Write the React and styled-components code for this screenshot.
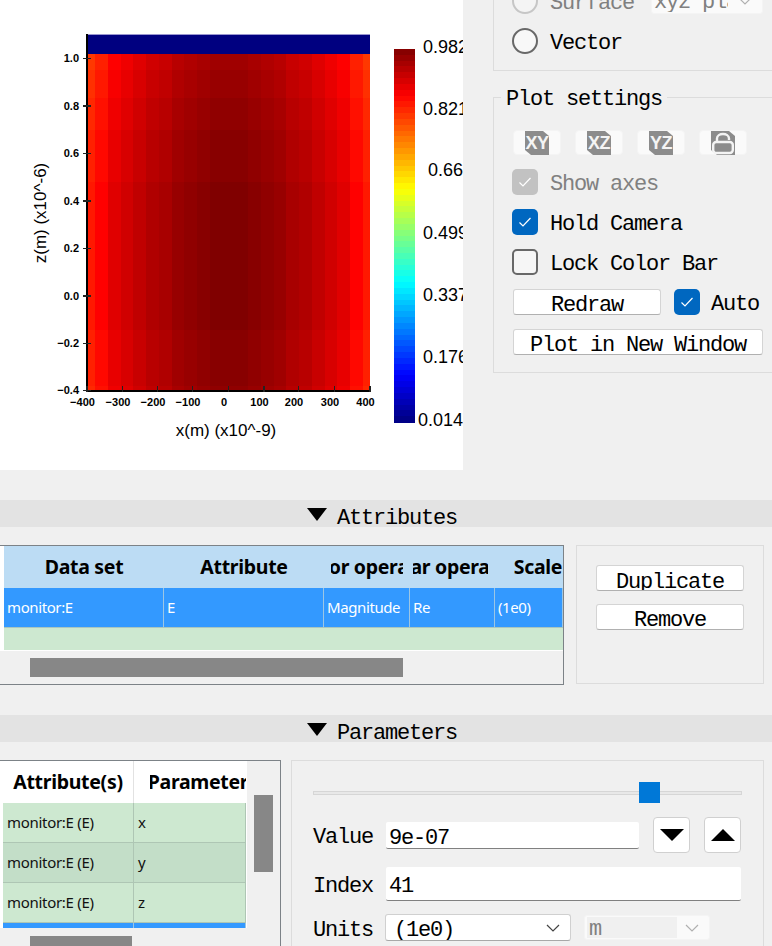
import styled, { createGlobalStyle } from "styled-components";

const UI_FONT = `"Liberation Mono", "DejaVu Sans Mono", monospace`;
const TABLE_FONT = `"Noto Sans", "Open Sans", sans-serif`;
const PLOT_FONT = `"Liberation Sans", Arial, sans-serif`;

const GlobalStyle = createGlobalStyle`
  html, body {
    margin: 0;
    background: #f0f0f0;
  }
`;

const Page = styled.div`
  width: 772px;
  height: 946px;
  overflow: hidden;
  background: #f0f0f0;
  font-family: ${UI_FONT};
  font-size: 22px;
  letter-spacing: -1.2px;
  color: #000;
`;

const TopRow = styled.div`
  display: flex;
  height: 500px;
`;

const PlotCanvas = styled.svg`
  display: block;
  flex: none;
  width: 463px;
  height: 470px;
  background: #fff;
  letter-spacing: 0;
`;

const TickLabel = styled.text`
  font-family: ${PLOT_FONT};
  font-size: 11px;
  font-weight: 700;
  fill: #000;
`;

const AxisTitle = styled.text`
  font-family: ${PLOT_FONT};
  font-size: 17px;
  fill: #000;
  text-anchor: middle;
`;

const BarLabel = styled.text`
  font-family: ${PLOT_FONT};
  font-size: 18px;
  fill: #000;
`;

const SideColumn = styled.div`
  flex: none;
  width: 309px;
  padding-left: 30px;
  box-sizing: border-box;
  display: flex;
  flex-direction: column;
  gap: 26px;
`;

const DisplayGroup = styled.div`
  flex: none;
  height: 111px;
  margin-top: -40px;
  margin-right: -10px;
  box-sizing: border-box;
  padding: 27px 0 0 18px;
  border: 1px solid #dcdcdc;
  display: flex;
  flex-direction: column;
  gap: 14px;
`;

const PlotGroup = styled.div`
  position: relative;
  flex: none;
  height: 276px;
  margin-right: -10px;
  box-sizing: border-box;
  padding: 32px 0 0 19px;
  border: 1px solid #dcdcdc;
  display: flex;
  flex-direction: column;
  gap: 14px;
`;

const GroupTitle = styled.span`
  position: absolute;
  top: -10px;
  left: 7px;
  padding: 0 5px 0 5px;
  background: #f0f0f0;
  line-height: 24px;
  white-space: nowrap;
`;

const OptionRow = styled.div`
  display: flex;
  align-items: center;
  gap: 12px;
  height: 26px;
  margin-left: ${(p) => (p.$flush ? "0" : "-1px")};
  color: ${(p) => (p.$disabled ? "#808080" : "#000")};
  white-space: nowrap;
`;

const OptionLabel = styled.span`
  line-height: 26px;
  margin-top: 6px;
`;

const Radio = styled.span`
  flex: none;
  width: 26px;
  height: 26px;
  box-sizing: border-box;
  border-radius: 50%;
  border: 2px solid ${(p) => (p.$disabled ? "#c6c6c6" : "#686868")};
  background: ${(p) => (p.$disabled ? "#f4f4f4" : "#f8f8f8")};
`;

const CheckFace = styled.span`
  flex: none;
  width: 26px;
  height: 26px;
  box-sizing: border-box;
  border-radius: 5px;
  display: flex;
  align-items: center;
  justify-content: center;
  border: ${(p) => (p.$state === "off" ? "2px solid #686868" : "none")};
  background: ${(p) =>
    p.$state === "on" ? "#0067c0" : p.$state === "disabled" ? "#c2c2c2" : "#f6f6f6"};
`;

function CheckBox({ state }) {
  return (
    <CheckFace $state={state}>
      {state !== "off" && (
        <svg width="14" height="12" viewBox="0 0 14 12">
          <path d="M1.5 6.5 L5 10 L12.5 2" fill="none" stroke="#fff" strokeWidth="1.2" />
        </svg>
      )}
    </CheckFace>
  );
}

const IconRow = styled.div`
  display: flex;
  gap: 14px;
`;

const IconButton = styled.div`
  flex: none;
  width: 48px;
  height: 25px;
  box-sizing: border-box;
  border: 1px solid #f4f4f4;
  border-radius: 4px;
  background: #fafafa;
  display: flex;
  justify-content: center;
`;

const PlaneIcon = styled.span`
  width: 24px;
  height: 24px;
  background: #8c8c8c;
  clip-path: polygon(0 0, 18px 0, 24px 5px, 24px 24px, 6px 24px, 0 19px);
  color: #f4f4f4;
  font-family: ${PLOT_FONT};
  font-weight: 700;
  font-size: 18px;
  line-height: 25px;
  letter-spacing: -0.5px;
  text-align: center;
`;

const PushButton = styled.div`
  flex: none;
  width: ${(p) => p.$width}px;
  height: 26px;
  box-sizing: border-box;
  border: 1px solid #d4d4d4;
  border-bottom-color: #b0b0b0;
  border-radius: 3px;
  background: #fff;
  overflow: hidden;
  text-align: center;
  line-height: ${(p) => (p.$clipText ? "34px" : "32px")};
  white-space: nowrap;
`;

const AutoRow = styled.div`
  display: flex;
  align-items: center;
  gap: 13px;
  height: 26px;
  white-space: nowrap;
`;

const AutoCheck = styled.div`
  display: flex;
  align-items: center;
  gap: 11px;
  height: 26px;
`;

const SectionBand = styled.div`
  height: 27px;
  background: #e3e3e3;
  display: flex;
  justify-content: center;
  gap: 10px;
  padding-right: 8px;
  overflow: hidden;
`;

const BandTriangle = styled.span`
  width: 0;
  height: 0;
  margin-top: 8px;
  border-left: 10px solid transparent;
  border-right: 10px solid transparent;
  border-top: 13px solid #000;
`;

const BandText = styled.span`
  line-height: 38px;
  white-space: nowrap;
`;

const AttributesRow = styled.div`
  display: flex;
  height: 140px;
  margin: 18px 0 30px;
`;

const AttributesFrame = styled.div`
  flex: none;
  width: 565px;
  margin-left: -1px;
  box-sizing: border-box;
  border: 1px solid #7c8287;
  overflow: hidden;
`;

const AttributesGrid = styled.div`
  display: grid;
  grid-template-columns: 160px 160px 86px 85px 1fr;
  padding-left: 4px;
  background: #fff;
  padding-bottom: 1px;
`;

const HeaderCell = styled.div`
  height: 42px;
  box-sizing: border-box;
  overflow: hidden;
  background: ${(p) => p.$bg};
  border-right: ${(p) => (p.$line ? `1px solid ${p.$line}` : "none")};
  display: flex;
  align-items: center;
  justify-content: center;
  padding: 0 ${(p) => p.$clipRight || 0}px 2px ${(p) => p.$clipLeft || 0}px;
  font-family: ${TABLE_FONT};
  font-weight: 700;
  font-size: 19.5px;
  letter-spacing: -0.3px;
  white-space: nowrap;
`;

const HeaderClip = styled.span`
  display: flex;
  justify-content: center;
  width: 100%;
  overflow: hidden;
`;

const HeaderText = styled.span`
  flex: none;
`;

const SelectedCell = styled.div`
  height: 39px;
  box-sizing: border-box;
  background: #3399ff;
  border-right: 1px solid #9cc6e4;
  padding-left: 3px;
  overflow: hidden;
  color: #fff;
  font-family: ${TABLE_FONT};
  font-size: 15px;
  letter-spacing: -0.4px;
  line-height: 39px;
  white-space: nowrap;
`;

const EmptyRow = styled.div`
  grid-column: 1 / -1;
  height: 23px;
  box-sizing: border-box;
  background: #cde8d0;
  border-top: 1px solid #a9c6c0;
`;

const HScroll = styled.div`
  padding: ${(p) => p.$top}px 0 0 ${(p) => p.$left}px;
`;

const ScrollThumb = styled.div`
  width: ${(p) => p.$width}px;
  height: ${(p) => p.$height}px;
  background: #878787;
`;

const ActionsBox = styled.div`
  flex: none;
  width: 188px;
  height: 139px;
  margin-left: 12px;
  box-sizing: border-box;
  border: 1px solid #dcdcdc;
  padding-top: 19px;
  display: flex;
  flex-direction: column;
  align-items: center;
  gap: 13px;
`;

const ParametersRow = styled.div`
  display: flex;
  margin-top: 18px;
`;

const ParamsFrame = styled.div`
  flex: none;
  width: 282px;
  height: 220px;
  margin-left: -1px;
  box-sizing: border-box;
  border: 1px solid #7c8287;
  display: flex;
`;

const ParamsColumn = styled.div`
  flex: none;
  width: 247px;
`;

const ParamsGrid = styled.div`
  display: grid;
  grid-template-columns: 131px 112px;
  padding: 0 1px 0 3px;
  background: #fff;
`;

const ParamCell = styled.div`
  height: 40px;
  box-sizing: border-box;
  background: ${(p) => p.$bg};
  border-right: 1px solid #aec6b4;
  border-bottom: 1px solid #aec6b4;
  padding-left: 4px;
  font-family: ${TABLE_FONT};
  font-size: 15px;
  letter-spacing: -0.3px;
  line-height: 38px;
  white-space: nowrap;
  overflow: hidden;
  color: #111;
`;

const ParamEdge = styled.div`
  height: 5px;
  background: #3399ff;
  border-right: 1px solid #9cc6e4;
`;

const VScroll = styled.div`
  padding: 34px 0 0 7px;
`;

const ParamPanel = styled.div`
  flex: none;
  width: 473px;
  height: 220px;
  margin-left: 10px;
  box-sizing: border-box;
  border: 1px solid #dcdcdc;
  padding: 21px 0 0 21px;
  display: flex;
  flex-direction: column;
`;

const SliderWrap = styled.div`
  position: relative;
  flex: none;
  width: 429px;
  height: 21px;
  display: flex;
  align-items: center;
`;

const SliderTrack = styled.div`
  width: 100%;
  height: 4px;
  box-sizing: border-box;
  border: 1px solid #d6d6d6;
  background: #e8e8e8;
`;

const SliderHandle = styled.div`
  position: absolute;
  left: 326px;
  top: 0;
  width: 21px;
  height: 21px;
  background: #0078d7;
`;

const FieldRow = styled.div`
  display: flex;
  align-items: center;
  gap: ${(p) => p.$gap || 14}px;
  margin-top: ${(p) => p.$top}px;
  height: ${(p) => p.$height}px;
  white-space: nowrap;
`;

const FieldLabel = styled.span`
  flex: none;
  width: 60px;
  margin-right: ${(p) => p.$after}px;
  text-align: right;
  line-height: 26px;
  padding-top: 6px;
`;

const TextField = styled.div`
  flex: none;
  width: ${(p) => p.$width}px;
  height: ${(p) => p.$height}px;
  box-sizing: border-box;
  padding-left: 3px;
  background: #fff;
  border-bottom: 1px solid #808080;
  border-radius: 2px;
  overflow: hidden;
  line-height: ${(p) => p.$height + 6}px;
`;

const StepButton = styled.div`
  flex: none;
  width: 37px;
  height: 36px;
  box-sizing: border-box;
  border: 1px solid #d0d0d0;
  border-radius: 4px;
  background: #fff;
  display: flex;
  align-items: center;
  justify-content: center;
`;

const StepTriangle = styled.span`
  width: 0;
  height: 0;
  border-left: 12px solid transparent;
  border-right: 12px solid transparent;
  ${(p) =>
    p.$up ? "border-bottom: 12px solid #000;" : "border-top: 12px solid #000;"}
`;

const Combo = styled.div`
  flex: none;
  width: ${(p) => p.$width}px;
  height: ${(p) => p.$height}px;
  margin-left: ${(p) => p.$before || 0}px;
  box-sizing: border-box;
  display: flex;
  align-items: center;
  justify-content: space-between;
  padding: ${(p) => (p.$disabled ? "2px 10px 2px 2px" : "0 10px 0 8px")};
  border: 1px solid ${(p) => (p.$disabled ? "#f4f4f4" : "#d0d0d0")};
  border-bottom-color: ${(p) => (p.$disabled ? "#f4f4f4" : "#a8a8a8")};
  border-radius: 3px;
  background: ${(p) => (p.$disabled ? "#fafafa" : "#fff")};
  color: ${(p) => (p.$disabled ? "#808080" : "#000")};
  overflow: hidden;
  white-space: nowrap;
`;

const ComboText = styled.span`
  display: block;
  overflow: hidden;
  width: ${(p) => p.$width || "auto"};
  line-height: ${(p) => p.$line || 32}px;
  height: ${(p) => p.$height || 26}px;
  background: ${(p) => p.$fill || "transparent"};
  padding-left: ${(p) => (p.$fill ? 2 : 0)}px;
`;

function Chevron({ color }) {
  return (
    <svg width="14" height="8" viewBox="0 0 14 8">
      <path d="M1 1 L7 7 L13 1" fill="none" stroke={color} strokeWidth="1.2" />
    </svg>
  );
}

function LockIcon() {
  return (
    <svg width="24" height="24" viewBox="0 0 24 24">
      <polygon points="0,0 18,0 24,5 24,24 6,24 0,19" fill="#8c8c8c" />
      <rect x="2.2" y="11" width="19.6" height="11" rx="3" fill="none" stroke="#f4f4f4" strokeWidth="2.4" />
      <path d="M6 11 V7.5 C6 1.5 18 1.5 18 7.5 V9" fill="none" stroke="#f4f4f4" strokeWidth="2.4" />
    </svg>
  );
}

// jet colour for a level counted down from the dark red end, 16 per step
const levelColor = (k) => {
  if (k <= 8) return `rgb(${Math.min(255, 128 + 16 * k)},0,0)`;
  return `rgb(255,${Math.round((k - 8) * 16)},0)`;
};

const jet = (t) => {
  const c = (v) => Math.round(255 * Math.max(0, Math.min(1, v)));
  return `rgb(${c(1.5 - Math.abs(4 * t - 3))},${c(1.5 - Math.abs(4 * t - 2))},${c(1.5 - Math.abs(4 * t - 1))})`;
};

// mesh columns from the left edge to the middle, read off the picture at z = 0.2
const COLUMN_LEVELS = [9.5, 8, 6, 5, 4, 3, 2.5, 1.5, 1, 0.5, 0];
const COLUMN_EDGES = [95, 107.75, 120.5, 133.25, 146, 158.75, 171.5, 184.25, 197, 209.75, 222.5];

const fieldRects = () => {
  const rects = [];
  // mirrored about x = 228, with one wider column in the middle
  const edges = [
    ...COLUMN_EDGES,
    235.25,
    ...COLUMN_EDGES.slice(0, -1).reverse().map((e) => 457.75 - e),
    370,
  ];
  const levels = [...COLUMN_LEVELS, 0, ...[...COLUMN_LEVELS].reverse()];
  for (let y = 54; y < 390; y += 4) {
    const v = y < 248 ? (248 - y) / 194 : (y - 248) / 142;
    const kc = y < 248 ? 2 * v * v : 0.8 * v * v;
    let left = 86;
    edges.forEach((right, i) => {
      const k = Math.round((kc + levels[i]) * 2) / 2;
      rects.push({ x: left, y, w: right - left, color: levelColor(k) });
      left = right;
    });
  }
  return rects;
};

const FIELD = fieldRects();
const LEVELS = Array.from({ length: 64 }, (_, i) => i);
const Y_TICKS = [
  ["1.0", 58], ["0.8", 105.5], ["0.6", 153], ["0.4", 200.5],
  ["0.2", 248], ["0.0", 295.5], ["−0.2", 343], ["−0.4", 390],
];
const X_TICKS = [
  ["−400", 86.5], ["−300", 122], ["−200", 157], ["−100", 192], ["0", 228],
  ["100", 263.5], ["200", 298], ["300", 334], ["400", 369.5],
];
const BAR_TICKS = [
  ["0.982", 423, 53], ["0.821", 423, 115], ["0.66", 428, 176], ["0.499", 423, 239],
  ["0.337", 423, 301], ["0.176", 423, 363], ["0.014", 418, 426],
];

function FieldPlot() {
  return (
    <PlotCanvas viewBox="0 0 463 470">
      <g shapeRendering="crispEdges">
        <rect x="86" y="34" width="284" height="1" fill="#9a96d0" />
        <rect x="86" y="35" width="284" height="19" fill="#000080" />
        {FIELD.map((r) => (
          <rect key={`${r.x}-${r.y}`} x={r.x} y={r.y} width={r.w} height="4" fill={r.color} />
        ))}
        <rect x="86" y="34" width="1.5" height="357" fill="#000" />
        <rect x="86" y="390" width="284" height="1.5" fill="#000" />
        {Y_TICKS.map(([label, y]) => (
          <rect key={label} x="83" y={y - 0.5} width="8" height="1.5" fill="#222" />
        ))}
        {X_TICKS.map(([label, x]) => (
          <rect key={label} x={x - 0.5} y="386" width="1.5" height="6" fill="#222" />
        ))}
        {LEVELS.map((i) => (
          <rect
            key={i}
            x="394"
            y={49 + (i * 373) / 64}
            width="21"
            height={373 / 64 + 0.5}
            fill={jet(1 - (i + 0.5) / 64)}
          />
        ))}
      </g>
      {Y_TICKS.map(([label, y]) => (
        <TickLabel key={label} x="79" y={y + 4} textAnchor="end">
          {label}
        </TickLabel>
      ))}
      {X_TICKS.map(([label, x]) => (
        <TickLabel key={label} x={x - 4} y="406" textAnchor="middle">
          {label}
        </TickLabel>
      ))}
      <AxisTitle x="226" y="436">x(m) (x10^-9)</AxisTitle>
      <AxisTitle transform="translate(46 213) rotate(-90)">z(m) (x10^-6)</AxisTitle>
      {BAR_TICKS.map(([label, x, y]) => (
        <BarLabel key={label} x={x} y={y}>
          {label}
        </BarLabel>
      ))}
    </PlotCanvas>
  );
}

function Band({ children }) {
  return (
    <SectionBand>
      <BandTriangle />
      <BandText>{children}</BandText>
    </SectionBand>
  );
}

const ATTR_HEADERS = [
  { text: "Data set" },
  { text: "Attribute" },
  { text: "Vector operation", clipLeft: 7, clipRight: 7 },
  { text: "Scalar operation", clipLeft: 3, clipRight: 7 },
  { text: "Scale", clipLeft: 18 },
];
const ATTR_ROW = ["monitor:E", "E", "Magnitude", "Re", "(1e0)"];
const PARAM_ROWS = [
  { name: "x", bg: "#cde8d0" },
  { name: "y", bg: "#c3dec8" },
  { name: "z", bg: "#cde8d0" },
];

export default function App() {
  return (
    <Page>
      <GlobalStyle />
      <TopRow>
        <FieldPlot />
        <SideColumn>
          <DisplayGroup>
            <OptionRow $disabled $flush>
              <Radio $disabled />
              <OptionLabel>Surface</OptionLabel>
              <Combo $width={112} $height={26} $disabled $before={5}>
                <ComboText $width="74px" $height={22} $line={26}>xyz plane</ComboText>
                <Chevron color="#b0b0b0" />
              </Combo>
            </OptionRow>
            <OptionRow $flush>
              <Radio />
              <OptionLabel>Vector</OptionLabel>
            </OptionRow>
          </DisplayGroup>
          <PlotGroup>
            <GroupTitle>Plot settings</GroupTitle>
            <IconRow>
              <IconButton><PlaneIcon>XY</PlaneIcon></IconButton>
              <IconButton><PlaneIcon>XZ</PlaneIcon></IconButton>
              <IconButton><PlaneIcon>YZ</PlaneIcon></IconButton>
              <IconButton><LockIcon /></IconButton>
            </IconRow>
            <OptionRow $disabled>
              <CheckBox state="disabled" />
              <OptionLabel>Show axes</OptionLabel>
            </OptionRow>
            <OptionRow>
              <CheckBox state="on" />
              <OptionLabel>Hold Camera</OptionLabel>
            </OptionRow>
            <OptionRow>
              <CheckBox state="off" />
              <OptionLabel>Lock Color Bar</OptionLabel>
            </OptionRow>
            <AutoRow>
              <PushButton $width={148}>Redraw</PushButton>
              <AutoCheck>
                <CheckBox state="on" />
                <OptionLabel>Auto</OptionLabel>
              </AutoCheck>
            </AutoRow>
            <PushButton $width={250}>Plot in New Window</PushButton>
          </PlotGroup>
        </SideColumn>
      </TopRow>

      <Band>Attributes</Band>
      <AttributesRow>
        <AttributesFrame>
          <AttributesGrid>
            {ATTR_HEADERS.map((h) => (
              <HeaderCell key={h.text} $bg="#bcdcf4" $clipLeft={h.clipLeft} $clipRight={h.clipRight}>
                <HeaderClip>
                  <HeaderText>{h.text}</HeaderText>
                </HeaderClip>
              </HeaderCell>
            ))}
            {ATTR_ROW.map((text) => (
              <SelectedCell key={text}>{text}</SelectedCell>
            ))}
            <EmptyRow />
          </AttributesGrid>
          <HScroll $top={7} $left={30}>
            <ScrollThumb $width={373} $height={19} />
          </HScroll>
        </AttributesFrame>
        <ActionsBox>
          <PushButton $width={148} $clipText>Duplicate</PushButton>
          <PushButton $width={148}>Remove</PushButton>
        </ActionsBox>
      </AttributesRow>

      <Band>Parameters</Band>
      <ParametersRow>
        <ParamsFrame>
          <ParamsColumn>
            <ParamsGrid>
              <HeaderCell $bg="#fff" $line="#e2e2e2">
                <HeaderClip><HeaderText>Attribute(s)</HeaderText></HeaderClip>
              </HeaderCell>
              <HeaderCell $bg="#fff" $clipLeft={16}>
                <HeaderClip><HeaderText>Parameter</HeaderText></HeaderClip>
              </HeaderCell>
              {PARAM_ROWS.map((row) => [
                <ParamCell key={`a${row.name}`} $bg={row.bg}>monitor:E (E)</ParamCell>,
                <ParamCell key={`p${row.name}`} $bg={row.bg}>{row.name}</ParamCell>,
              ])}
              <ParamEdge />
              <ParamEdge />
            </ParamsGrid>
            <HScroll $top={8} $left={30}>
              <ScrollThumb $width={102} $height={19} />
            </HScroll>
          </ParamsColumn>
          <VScroll>
            <ScrollThumb $width={19} $height={77} />
          </VScroll>
        </ParamsFrame>
        <ParamPanel>
          <SliderWrap>
            <SliderTrack />
            <SliderHandle />
          </SliderWrap>
          <FieldRow $top={14} $height={36}>
            <FieldLabel $after={-1}>Value</FieldLabel>
            <TextField $width={253} $height={27}>9e-07</TextField>
            <StepButton><StepTriangle /></StepButton>
            <StepButton><StepTriangle $up /></StepButton>
          </FieldRow>
          <FieldRow $top={14} $height={34}>
            <FieldLabel $after={-1}>Index</FieldLabel>
            <TextField $width={355} $height={34}>41</TextField>
          </FieldRow>
          <FieldRow $top={13} $height={27} $gap={13}>
            <FieldLabel $after={-1}>Units</FieldLabel>
            <Combo $width={186} $height={27}>
              <ComboText>(1e0)</ComboText>
              <Chevron color="#444" />
            </Combo>
            <Combo $width={126} $height={25} $disabled>
              <ComboText $fill="#f0f0f0" $width="88px" $height={21} $line={26}>m</ComboText>
              <Chevron color="#b0b0b0" />
            </Combo>
          </FieldRow>
        </ParamPanel>
      </ParametersRow>
    </Page>
  );
}
